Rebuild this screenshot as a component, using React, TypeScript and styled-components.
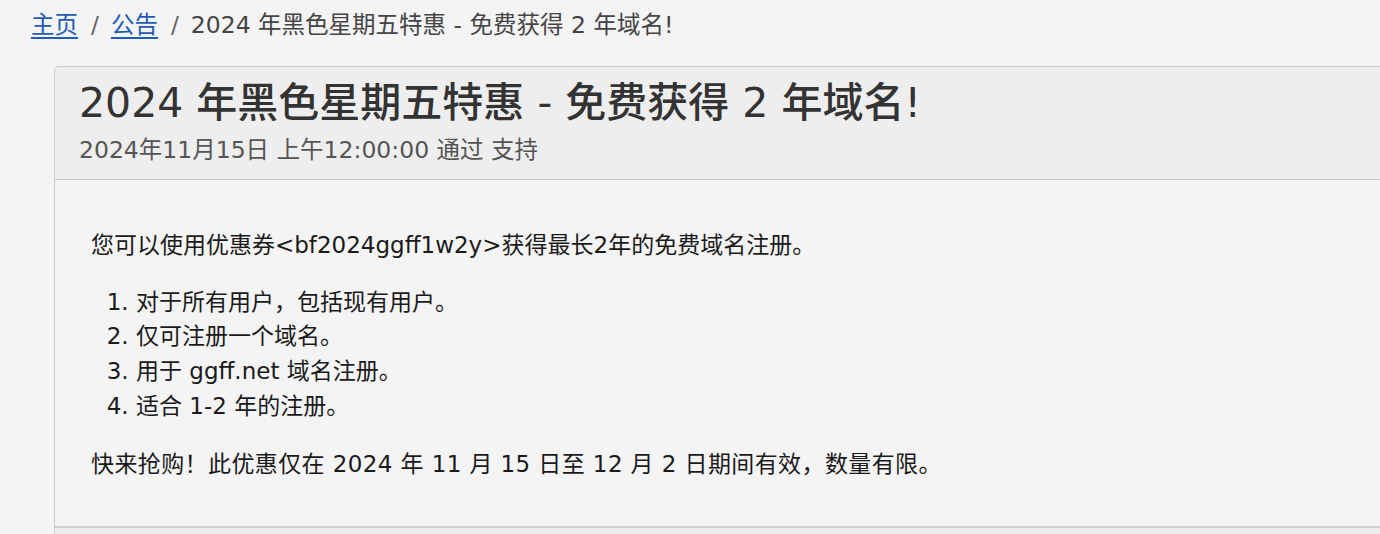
import React from "react";
import styled, { createGlobalStyle } from "styled-components";

const Global = createGlobalStyle`
  html, body {
    margin: 0;
    padding: 0;
    background: #f4f4f4;
    overflow: hidden;
  }
  body {
    font-family: "DejaVu Sans", "Noto Sans CJK SC", sans-serif;
    color: #222;
  }
`;

const Page = styled.div`
  width: 1380px;
  height: 534px;
  overflow: hidden;
`;

const Breadcrumb = styled.nav`
  display: flex;
  align-items: center;
  padding: 9px 0 0 31px;
  height: 32px;
  font-size: 23.5px;
  line-height: 32px;
  color: #444;
`;

const Crumb = styled.a`
  color: #1f5bb8;
  text-decoration: underline;
  text-underline-offset: 4px;
  text-decoration-thickness: 1.5px;
`;

const Sep = styled.span`
  color: #666;
  padding: 0 12px 0 13px;
`;

const Current = styled.span`
  color: #444;
`;

const Main = styled.main`
  padding: 25px 0 0 54px;
`;

const Card = styled.article`
  margin-right: -30px;
  border: 1px solid #cccccc;
  border-radius: 5px 5px 0 0;
  background: #f4f4f4;
`;

const Header = styled.header`
  background: #eeeeee;
  border-bottom: 1px solid #c8c8c8;
  border-radius: 5px 5px 0 0;
  padding: 12px 24px 12px 24px;
`;

const Title = styled.h1`
  margin: 0;
  font-size: 41px;
  line-height: 48px;
  font-weight: 500;
  color: #333;
`;

const Meta = styled.div`
  margin-top: 6px;
  font-size: 23.5px;
  line-height: 34px;
  color: #555;
`;

const Body = styled.div`
  padding: 48px 36px 44px 36px;
  font-size: 23px;
  line-height: 34.67px;
  color: #1a1a1a;
`;

const Para = styled.p<{ $wide?: boolean }>`
  margin: 0;
  letter-spacing: ${(p) => (p.$wide ? "0.4px" : "0")};
`;

const List = styled.ol`
  margin: 22px 0 24px 0;
  padding-left: 45px;
`;

const Item = styled.li``;

const Footer = styled.div`
  border-top: 2px solid #cfcfcf;
  background: #eeeeee;
  height: 60px;
`;

export default function App() {
  return (
    <Page>
      <Global />
      <Breadcrumb>
        <Crumb href="#">主页</Crumb>
        <Sep>/</Sep>
        <Crumb href="#">公告</Crumb>
        <Sep>/</Sep>
        <Current>2024 年黑色星期五特惠 - 免费获得 2 年域名!</Current>
      </Breadcrumb>
      <Main>
        <Card>
          <Header>
            <Title>2024 年黑色星期五特惠 - 免费获得 2 年域名!</Title>
            <Meta>2024年11月15日 上午12:00:00 通过 支持</Meta>
          </Header>
          <Body>
            <Para>您可以使用优惠券&lt;bf2024ggff1w2y&gt;获得最长2年的免费域名注册。</Para>
            <List>
              <Item>对于所有用户，包括现有用户。</Item>
              <Item>仅可注册一个域名。</Item>
              <Item>用于 ggff.net 域名注册。</Item>
              <Item>适合 1-2 年的注册。</Item>
            </List>
            <Para $wide>快来抢购！此优惠仅在 2024 年 11 月 15 日至 12 月 2 日期间有效，数量有限。</Para>
          </Body>
          <Footer />
        </Card>
      </Main>
    </Page>
  );
}
